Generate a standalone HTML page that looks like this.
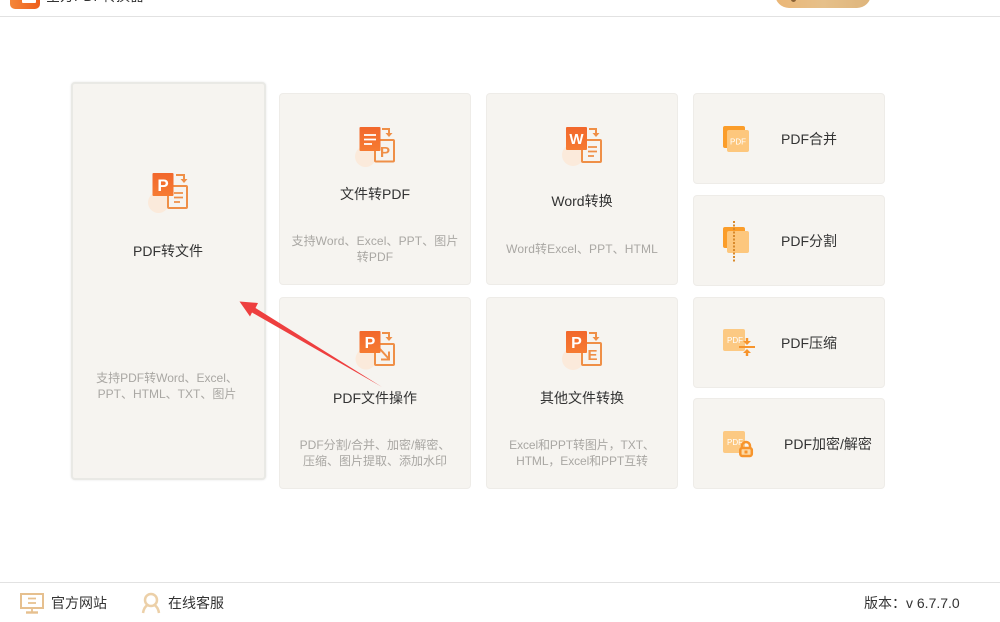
<!DOCTYPE html>
<html lang="zh">
<head>
<meta charset="utf-8">
<style>
html,body{margin:0;padding:0;background:#fff}
body{width:1000px;height:622px;overflow:hidden;position:relative;font-family:"Liberation Sans","Noto Sans CJK SC",sans-serif;color:#333}
.c{position:absolute;background:#f6f4f0;border:1px solid #eeece8;border-radius:4px;box-sizing:border-box}
.big{border:2px solid #e9e9e5;box-shadow:0 0 2px #e6e6e6}
.t{position:absolute;font-size:14px;line-height:20px;white-space:nowrap;color:#333}
.tc{transform:translateX(-50%);text-align:center}
.d{position:absolute;font-size:12px;line-height:16px;color:#a9a7a3;text-align:center;transform:translateX(-50%);white-space:nowrap;letter-spacing:.1px}
svg{position:absolute;overflow:visible}
.ln{position:absolute;left:0;width:1000px;height:1px;background:#e2e2e2}
</style>
</head>
<body>
<!-- header -->
<div style="position:absolute;left:10px;top:-16px;width:30px;height:25px;border-radius:5px;background:linear-gradient(90deg,#f4873a,#ee5e1c)"></div>
<div style="position:absolute;left:22px;top:-8px;width:14px;height:11px;background:#fff;border-radius:1px"></div>
<div class="t" style="left:46px;top:-14px;font-size:14px;color:#333">全方PDF转换器</div>
<div class="t" style="left:720px;top:-17px;color:#555;font-size:14px">个人</div>
<div style="position:absolute;left:775px;top:-20px;width:96px;height:28px;border-radius:0 0 14px 14px;background:linear-gradient(90deg,#ebb676,#e6c08a 50%,#deb57c)"></div>
<div style="position:absolute;left:791px;top:-3px;width:5px;height:5px;border-radius:50%;background:#8a6236"></div>
<div class="ln" style="top:16px"></div>

<!-- cards -->
<div class="c big" style="left:71px;top:82px;width:195px;height:398px"></div>
<div class="c" style="left:279px;top:93px;width:192px;height:192px"></div>
<div class="c" style="left:486px;top:93px;width:192px;height:192px"></div>
<div class="c" style="left:279px;top:297px;width:192px;height:192px"></div>
<div class="c" style="left:486px;top:297px;width:192px;height:192px"></div>
<div class="c" style="left:693px;top:93px;width:192px;height:91px"></div>
<div class="c" style="left:693px;top:195px;width:192px;height:91px"></div>
<div class="c" style="left:693px;top:297px;width:192px;height:91px"></div>
<div class="c" style="left:693px;top:398px;width:192px;height:91px"></div>

<svg width="0" height="0" style="position:absolute">
<defs>
<linearGradient id="g" x1="0" y1="0" x2="0" y2="1"><stop offset="0" stop-color="#f2672c"/><stop offset="1" stop-color="#f67b32"/></linearGradient>
</defs>
</svg>

<!-- icon 1: PDF to file -->
<svg style="left:148px;top:173px" width="42" height="41" viewBox="0 0 42 41">
<circle cx="10.500" cy="29.500" r="10.500" fill="#fbeadb"/>
<rect x="20" y="13" width="19" height="22" rx="1" fill="#f6f4f0" stroke="#ef8f47" stroke-width="2"/>
<path d="M26 20h9M26 24.500h9M26 29h6" stroke="#ef8f47" stroke-width="1.800" fill="none"/>
<rect x="4.500" y="0" width="21" height="23" rx="1" fill="url(#g)"/>
<text x="15" y="18" font-size="17" fill="#fff" text-anchor="middle" font-family="Liberation Sans" font-weight="bold">P</text>
<path d="M28 2h8v5" stroke="#ef8f47" stroke-width="2" fill="none"/>
<path d="M32.500 6h7l-3.500 4z" fill="#ef8f47"/>
</svg>
<!-- icon 2: file to PDF -->
<svg style="left:355px;top:127px" width="42" height="41" viewBox="0 0 42 41">
<circle cx="10.500" cy="29.500" r="10.500" fill="#fbeadb"/>
<rect x="20" y="13" width="19" height="21.500" rx="1" fill="#f6f4f0" stroke="#ef8f47" stroke-width="2"/>
<text x="30" y="30" font-size="15" font-weight="bold" fill="#ef8f47" text-anchor="middle" font-family="Liberation Sans">P</text>
<rect x="4.500" y="0" width="21" height="24" rx="1" fill="url(#g)"/>
<path d="M9 8h12M9 12.500h12M9 17h8" stroke="#fff" stroke-width="1.800" fill="none"/>
<path d="M27 2h7v5" stroke="#ef8f47" stroke-width="2" fill="none"/>
<path d="M30.500 6h7l-3.500 4z" fill="#ef8f47"/>
</svg>
<!-- icon 3: Word -->
<svg style="left:562px;top:127px" width="42" height="41" viewBox="0 0 42 41">
<circle cx="11" cy="28" r="11" fill="#fbeadb"/>
<rect x="20" y="13" width="19" height="22" rx="1" fill="#f6f4f0" stroke="#ef8f47" stroke-width="2"/>
<path d="M26 20h9M26 24.500h9M26 29h6" stroke="#ef8f47" stroke-width="1.800" fill="none"/>
<rect x="4" y="0" width="21" height="23" rx="1" fill="url(#g)"/>
<text x="14.500" y="17" font-size="15" font-weight="bold" fill="#fff" text-anchor="middle" font-family="Liberation Sans">W</text>
<path d="M27 2h7v5" stroke="#ef8f47" stroke-width="2" fill="none"/>
<path d="M30.500 6h7l-3.500 4z" fill="#ef8f47"/>
</svg>
<!-- icon 4: PDF operations -->
<svg style="left:355px;top:331px" width="42" height="41" viewBox="0 0 42 41">
<circle cx="11" cy="28" r="10.500" fill="#fbeadb"/>
<rect x="20" y="13" width="19" height="21" rx="1" fill="#f6f4f0" stroke="#ef8f47" stroke-width="2"/>
<path d="M25 18l9 10M34 20.500v8h-8" stroke="#ef8f47" stroke-width="2" fill="none"/>
<rect x="4.500" y="0" width="21" height="22" rx="1" fill="url(#g)"/>
<text x="15" y="17" font-size="16" font-weight="bold" fill="#fff" text-anchor="middle" font-family="Liberation Sans">P</text>
<path d="M27 2h7v5" stroke="#ef8f47" stroke-width="2" fill="none"/>
<path d="M30.500 6h7l-3.500 4z" fill="#ef8f47"/>
</svg>
<!-- icon 5: other -->
<svg style="left:562px;top:331px" width="42" height="41" viewBox="0 0 42 41">
<circle cx="11" cy="28" r="11" fill="#fbeadb"/>
<rect x="20" y="12" width="19" height="22" rx="1" fill="#f6f4f0" stroke="#ef8f47" stroke-width="2"/>
<text x="30.500" y="29" font-size="15" font-weight="bold" fill="#ef8f47" text-anchor="middle" font-family="Liberation Sans">E</text>
<rect x="4" y="0" width="21" height="22" rx="1" fill="url(#g)"/>
<text x="14.500" y="17" font-size="16" font-weight="bold" fill="#fff" text-anchor="middle" font-family="Liberation Sans">P</text>
<path d="M27 2h7v5" stroke="#ef8f47" stroke-width="2" fill="none"/>
<path d="M30.500 6h7l-3.500 4z" fill="#ef8f47"/>
</svg>

<!-- right icons -->
<svg style="left:723px;top:126px" width="26" height="26" viewBox="0 0 26 26">
<rect x="0" y="0" width="22" height="22" rx="2" fill="#fb9d2a"/>
<rect x="4" y="4" width="22" height="22" rx="2" fill="#fdc77d"/>
<text x="15" y="18.500" font-size="8" fill="#fff" text-anchor="middle" font-family="Liberation Sans">PDF</text>
</svg>
<svg style="left:723px;top:221px" width="26" height="41" viewBox="0 0 26 41">
<rect x="0" y="6" width="22" height="21" rx="2" fill="#fb9d2a"/>
<rect x="4" y="10" width="22" height="22" rx="2" fill="#fdc77d"/>
<path d="M11 0v41" stroke="#d98a2c" stroke-width="2" stroke-dasharray="2 1.500" fill="none"/>
</svg>
<svg style="left:723px;top:329px" width="33" height="27" viewBox="0 0 33 27">
<rect x="0" y="0" width="22" height="22" rx="2" fill="#fcc983"/>
<text x="12" y="14" font-size="8" fill="#fff" text-anchor="middle" font-family="Liberation Sans">PDF</text>
<path d="M16 18h16" stroke="#f7942c" stroke-width="2" fill="none"/>
<path d="M22.800 9h2.400v3H28l-4 4-4-4h2.800zM22.800 27h2.400v-3H28l-4-4-4 4h2.800z" fill="#f7942c"/>
</svg>
<svg style="left:723px;top:431px" width="31" height="27" viewBox="0 0 31 27">
<rect x="0" y="0" width="22" height="22" rx="2" fill="#fcc983"/>
<text x="12" y="14" font-size="8" fill="#fff" text-anchor="middle" font-family="Liberation Sans">PDF</text>
<path d="M19 17v-2a4 4 0 0 1 8 0v2" stroke="#f7942c" stroke-width="2.500" fill="none"/>
<rect x="17.300" y="17" width="11.500" height="8" rx="2" fill="#fcd9a6" stroke="#f7942c" stroke-width="2.500"/>
<rect x="21.500" y="19.500" width="3" height="3" fill="#f7942c"/>
</svg>

<!-- titles -->
<div class="t tc" style="left:168px;top:241px">PDF转文件</div>
<div class="d" style="left:167px;top:370px;letter-spacing:0">支持PDF转Word、Excel、<br>PPT、HTML、TXT、图片</div>
<div class="t tc" style="left:375px;top:184px">文件转PDF</div>
<div class="d" style="left:375px;top:233px">支持Word、Excel、PPT、图片<br>转PDF</div>
<div class="t tc" style="left:582px;top:191px">Word转换</div>
<div class="d" style="left:582px;top:241px">Word转Excel、PPT、HTML</div>
<div class="t tc" style="left:375px;top:388px">PDF文件操作</div>
<div class="d" style="left:375px;top:437px;letter-spacing:0">PDF分割/合并、加密/解密、<br>压缩、图片提取、添加水印</div>
<div class="t tc" style="left:582px;top:388px">其他文件转换</div>
<div class="d" style="left:582px;top:437px;letter-spacing:-.1px">Excel和PPT转图片，TXT、<br>HTML，Excel和PPT互转</div>
<div class="t" style="left:781px;top:129px">PDF合并</div>
<div class="t" style="left:781px;top:231px">PDF分割</div>
<div class="t" style="left:781px;top:333px">PDF压缩</div>
<div class="t" style="left:784px;top:434px">PDF加密/解密</div>

<!-- red arrow -->
<svg style="left:0;top:0" width="1000" height="622" viewBox="0 0 1000 622">
<polygon points="239.500,301.500 258,303 255.500,308 382,387 252,312.500 250,316.500" fill="#ee3f3f"/>
</svg>

<!-- footer -->
<div class="ln" style="top:582px"></div>
<svg style="left:20px;top:593px" width="24" height="21" viewBox="0 0 24 21">
<rect x="1" y="1" width="22" height="14" fill="none" stroke="#e6c08f" stroke-width="2"/>
<path d="M8 5.500h8M8 10h8M12 15v4" stroke="#e6c08f" stroke-width="1.800" fill="none"/>
<path d="M6 19.500h12" stroke="#e6c08f" stroke-width="2.400" fill="none"/>
</svg>
<div class="t" style="left:51px;top:593px">官方网站</div>
<svg style="left:142px;top:593px" width="18" height="21" viewBox="0 0 18 21">
<circle cx="9" cy="7" r="6" fill="none" stroke="#ecd0a8" stroke-width="2.500"/>
<path d="M5 12.500C2.500 14 1.500 17 1 20M13 12.500c2.500 1.500 3.500 4.500 4 7.500" fill="none" stroke="#ecd0a8" stroke-width="2.500"/>
</svg>
<div class="t" style="left:168px;top:593px">在线客服</div>
<div class="t" style="left:864px;top:593px">版本：v 6.7.7.0</div>
</body>
</html>
